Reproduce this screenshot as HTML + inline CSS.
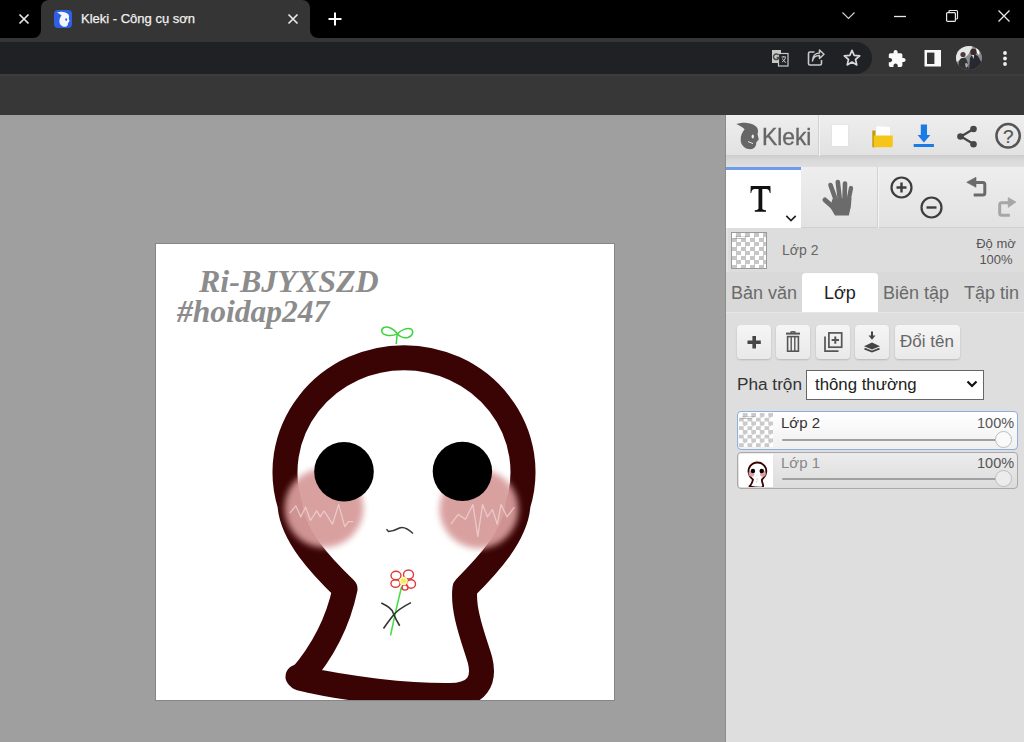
<!DOCTYPE html>
<html><head><meta charset="utf-8">
<style>
*{margin:0;padding:0;box-sizing:border-box}
html,body{width:1024px;height:742px;overflow:hidden;background:#9f9f9f;font-family:"Liberation Sans",sans-serif}
.a{position:absolute}
#tabstrip{left:0;top:0;width:1024px;height:38px;background:#000}
#tab{left:41px;top:0px;width:269px;height:42px;background:#353535;border-radius:8px 8px 0 0}
#toolbar{left:0;top:38px;width:1024px;height:36px;background:#353535}
#omni{left:-20px;top:42px;width:892px;height:32px;background:#202124;border-radius:0 16px 16px 0}
#band{left:0;top:74px;width:1024px;height:41px;background:#373737;border-top:2px solid #3c3c3c}
#canvasbg{left:0;top:115px;width:726px;height:627px;background:#9f9f9f}
#panel{left:726px;top:115px;width:298px;height:627px;background:#dddddd;border-left:2px solid #e3e3e3}
#pline{left:725px;top:115px;width:1px;height:627px;background:#8c8c8c}
.t{white-space:nowrap;line-height:1}
.btn{top:325px;height:34px;border-radius:4px;background:linear-gradient(#f5f5f5,#e9e9e9);box-shadow:0 1px 2px rgba(0,0,0,0.18)}
</style></head><body>
<div class="a" id="tabstrip"></div>
<div class="a" id="toolbar"></div>
<div class="a" id="tab"></div>

<div class="a" style="left:33px;top:30px;width:8px;height:8px;background:#353535"></div>
<div class="a" style="left:25px;top:22px;width:16px;height:16px;background:#000;border-radius:50%"></div>
<div class="a" style="left:310px;top:30px;width:8px;height:8px;background:#353535"></div>
<div class="a" style="left:310px;top:22px;width:16px;height:16px;background:#000;border-radius:50%"></div>
<div class="a" id="omni"></div>
<div class="a" id="band"></div>
<div class="a" id="canvasbg"></div>
<div class="a" id="panel"></div><div class="a" id="pline"></div>
<!-- tab contents -->
<div class="a t" style="left:81px;top:12px;font-size:13px;color:#f0f0f0;-webkit-text-stroke:0.25px #f0f0f0">Kleki - Công cụ sơn</div>


<!-- left close x -->
<svg class="a" style="left:17px;top:12px" width="14" height="14" viewBox="0 0 14 14"><path d="M2.5 2.5L11.5 11.5M11.5 2.5L2.5 11.5" stroke="#e8e8e8" stroke-width="1.7"/></svg>
<!-- favicon -->
<svg class="a" style="left:54px;top:10px" width="18" height="18" viewBox="0 0 18 18"><rect x="0" y="0" width="18" height="18" rx="4" fill="#2f5fe3"/><g transform="translate(-0.6,-0.8) scale(0.56)"><path d="M6.3 6.1C10 5 14 4.5 17 4.9C21 5.3 24.5 6.5 26.5 9C28.2 11 28.5 13.5 27.5 16L28.8 21.5L26.2 24.5C26.5 27 25.5 29.5 23 30.8C20 31.8 16.5 31 14 29C11.5 27 10.5 24 10.7 21C10.8 17.5 12 14.5 14.6 11.2C12 9 9 7.5 6.3 6.1Z" fill="#f2f6ff"/><ellipse cx="22.8" cy="18.6" rx="1.6" ry="2.4" fill="#2f5fe3"/></g></svg>
<!-- tab close -->
<svg class="a" style="left:286px;top:12px" width="14" height="14" viewBox="0 0 14 14"><path d="M2.5 2.5L11.5 11.5M11.5 2.5L2.5 11.5" stroke="#e8e8e8" stroke-width="1.7"/></svg>
<!-- new tab + -->
<svg class="a" style="left:327px;top:11px" width="16" height="16" viewBox="0 0 16 16"><path d="M8 1.5V14.5M1.5 8H14.5" stroke="#fff" stroke-width="2"/></svg>
<!-- window controls -->
<svg class="a" style="left:840px;top:8px" width="18" height="14" viewBox="0 0 18 14"><path d="M2.5 4.5L8.5 10.5L14.5 4.5" stroke="#d0d0d0" stroke-width="1.2" fill="none"/></svg>
<svg class="a" style="left:892px;top:10px" width="16" height="12" viewBox="0 0 16 12"><path d="M2 6.5H14" stroke="#e8e8e8" stroke-width="1.3"/></svg>
<svg class="a" style="left:944px;top:8px" width="16" height="16" viewBox="0 0 16 16"><path d="M5 4.5V3.5C5 2.9 5.4 2.5 6 2.5H12.5C13.1 2.5 13.5 2.9 13.5 3.5V10C13.5 10.6 13.1 11 12.5 11H11.5" stroke="#e8e8e8" stroke-width="1.2" fill="none"/><rect x="2.6" y="4.6" width="8.8" height="8.8" rx="1" stroke="#e8e8e8" stroke-width="1.2" fill="none"/></svg>
<svg class="a" style="left:996px;top:8px" width="16" height="16" viewBox="0 0 16 16"><path d="M2.5 2.5L13.5 13.5M13.5 2.5L2.5 13.5" stroke="#e8e8e8" stroke-width="1.3"/></svg>
<!-- omnibox icons -->
<svg class="a" style="left:770px;top:48px" width="20" height="20" viewBox="0 0 20 20"><path d="M2.5 2.5H10.5L11.5 5.5H17.5V17.5H8.5L7.5 14.5H2.5Z" fill="none"/><rect x="2" y="2" width="9" height="13" fill="#c8c8c8"/><rect x="8.5" y="5.5" width="9.5" height="12.5" fill="#202124" stroke="#c8c8c8" stroke-width="1.2"/><path d="M8.6 7.2A2.8 2.8 0 1 0 9 9.5H6.6" fill="none" stroke="#4a4a4a" stroke-width="1.5"/><path d="M11.5 9H16M13.7 8V9M12 14C14 13 15 11.5 15.5 9.5M12.5 10.5C13 12.5 14.5 14 16 14.5" stroke="#c8c8c8" stroke-width="1" fill="none"/></svg>
<svg class="a" style="left:806px;top:49px" width="20" height="18" viewBox="0 0 20 18"><path d="M8.5 3H4C3 3 2.5 3.5 2.5 4.5V14.5C2.5 15.5 3 16 4 16H14C15 16 15.5 15.5 15.5 14.5V11" stroke="#c8c8c8" stroke-width="1.6" fill="none"/><path d="M6.5 12C7 8.5 9.5 6.5 13.5 6.5V9.5L18 5.2L13.5 1V4C9 4 6.5 7.5 6.5 12Z" stroke="#c8c8c8" stroke-width="1.5" fill="none" stroke-linejoin="round"/></svg>
<svg class="a" style="left:842px;top:48px" width="20" height="20" viewBox="0 0 20 20"><path d="M10 2.3L12.2 7.4L17.7 7.9L13.5 11.5L14.8 16.9L10 14L5.2 16.9L6.5 11.5L2.3 7.9L7.8 7.4Z" stroke="#d8d8d8" stroke-width="1.7" fill="none" stroke-linejoin="round"/></svg>
<!-- right toolbar icons -->
<svg class="a" style="left:886px;top:48px" width="22" height="22" viewBox="0 0 22 22"><path transform="translate(1.2,1.3) scale(0.8)" d="M20.5 11H19V7c0-1.1-.9-2-2-2h-4V3.5C13 2.12 11.88 1 10.5 1S8 2.12 8 3.5V5H4c-1.1 0-1.99.9-1.99 2v3.8H3.5c1.49 0 2.7 1.21 2.7 2.7s-1.21 2.7-2.7 2.7H2V20c0 1.1.9 2 2 2h3.8v-1.5c0-1.490 1.21-2.7 2.7-2.7 1.49 0 2.7 1.21 2.7 2.7V22H17c1.1 0 2-.9 2-2v-4h1.5c1.38 0 2.5-1.12 2.5-2.5S21.88 11 20.5 11z" fill="#fafafa"/></svg>
<svg class="a" style="left:923px;top:48px" width="20" height="20" viewBox="0 0 20 20"><rect x="1.5" y="2" width="16.5" height="16.5" fill="#fafafa"/><rect x="4" y="4.6" width="7.4" height="11.4" fill="#353535"/></svg>
<svg class="a" style="left:956px;top:46px" width="26" height="24" viewBox="0 0 26 24"><defs><clipPath id="av"><ellipse cx="13" cy="12" rx="13" ry="12"/></clipPath></defs><g clip-path="url(#av)"><rect width="26" height="24" fill="#8a8a8a"/><path d="M0 0H17L12 9L5 14L0 16Z" fill="#e6e6e6"/><path d="M13 24L14 12C15 9 18 8 20 9C23 10 24 14 26 18V24Z" fill="#262a30"/><circle cx="17.5" cy="6" r="3.2" fill="#3a2c2c"/><path d="M16 9L18 9L17.5 13Z" fill="#f0f0f0"/><path d="M2 24L3 15C4 12 7 11 9 12C11 13 12 17 13 24Z" fill="#303236"/><circle cx="7" cy="8.5" r="2.6" fill="#4a3a3a"/><path d="M20 2C23 3 24 6 23 9L21 7Z" fill="#f4f4f4"/><path d="M9 18C10 16 12 17 12 20L10 22Z" fill="#b8a8a0"/></g></svg>
<svg class="a" style="left:1001px;top:49px" width="8" height="20" viewBox="0 0 8 20"><circle cx="4" cy="4" r="1.9" fill="#f0f0f0"/><circle cx="4" cy="9.5" r="1.9" fill="#f0f0f0"/><circle cx="4" cy="15" r="1.9" fill="#f0f0f0"/></svg>


<!-- CANVAS -->
<svg class="a" style="left:0;top:0" width="1024" height="742" viewBox="0 0 1024 742">
<defs>
<clipPath id="cv"><rect x="156" y="244" width="458" height="456"/></clipPath>
<radialGradient id="bl" cx="0.5" cy="0.5" r="0.5">
<stop offset="0" stop-color="#d88f8f" stop-opacity="0.95"/>
<stop offset="0.78" stop-color="#d99595" stop-opacity="0.9"/>
<stop offset="1" stop-color="#e0a0a0" stop-opacity="0"/>
</radialGradient>
<filter id="blur" x="-50%" y="-50%" width="200%" height="200%"><feGaussianBlur stdDeviation="3"/></filter>
</defs>
<rect x="155" y="243" width="460" height="458" fill="#868686"/>
<rect x="156" y="244" width="458" height="456" fill="#ffffff"/>
<g clip-path="url(#cv)"><g id="art"><g id="txt">
<text x="199" y="291.5" font-family="Liberation Serif" font-weight="bold" font-style="italic" font-size="32" fill="#8c8c8c">Ri-BJYXSZD</text>
<text x="177" y="321.5" font-family="Liberation Serif" font-weight="bold" font-style="italic" font-size="31.5" fill="#8c8c8c">#hoidap247</text>
</g><g id="fig"><path d="M290 505A119 114.5 0 1 1 518 505C516 535 488 565 465 588C462 610 474 640 480 660C485 680 478 695 450 695.5C410 696 345 689 300 678C313 663 336 632 345 589C321 566 292 535 290 505Z" fill="none" stroke="#3a0404" stroke-width="25" stroke-linejoin="round"/>
<path d="M312 681L297.5 676.5" stroke="#3a0404" stroke-width="24" stroke-linecap="round"/>
<g filter="url(#blur)" fill="#d89b9b" opacity="0.95"><circle cx="324" cy="508" r="39.5"/><circle cx="479" cy="509" r="39.5"/></g>
<circle cx="344" cy="471.7" r="29.8" fill="#000"/>
<circle cx="462.4" cy="471.4" r="29.7" fill="#000"/>
<path d="M289.8 513.2L295.9 505.9L300.8 516.9L305.6 507.1L310.5 520.5L316.6 510.8L320.3 516.9L324 511L326.4 514.4L332.5 524.2L338.6 504.6L344.7 526.6L348.4 521.7L353.2 521.7" stroke="#f4dada" stroke-width="1.3" fill="none" opacity="0.7" stroke-linejoin="round"/>
<path d="M450.9 524.2L458.2 514.4L465.5 519.3L472.9 504.6L477.8 536.4L482.6 504.6L487.5 516.9L492.4 509.5L497.3 524.2L501 504.6L507 516.9L514.4 507.1" stroke="#f4dada" stroke-width="1.3" fill="none" opacity="0.7" stroke-linejoin="round"/>
<path d="M386.5 529.3L388.5 531.5Q394 531 399.5 528Q405 526 413 533.5" stroke="#383838" stroke-width="1.5" fill="none"/>
<!-- sprout -->
<path d="M396.2 344L397.2 334" stroke="#3fd43f" stroke-width="1.5"/>
<path d="M397.4 333.8C394 329 388 326 384 327.5C380.5 329 381 334 386 335C390 336 395 335 397.4 333.8C401 330 407 327.5 411 329C414 331 413 336 408 337.5C403 338.5 399 336 397.4 333.8" stroke="#3fd43f" stroke-width="1.5" fill="none"/>
<!-- flower -->
<path d="M401.5 587L396 610L390.5 635.5" stroke="#44dd44" stroke-width="1.5" fill="none"/>
<path d="M381.3 603.1Q392 608 393.2 613Q396 620 399.7 625.8M411 602.6Q398 609 392.7 616Q388 622 383.5 628.5" stroke="#333" stroke-width="1.6" fill="none"/>
<g stroke="#e03838" stroke-width="1.4" fill="none">
<ellipse cx="396" cy="575.5" rx="5" ry="4.3"/><ellipse cx="408.5" cy="574.5" rx="5" ry="4.5"/><ellipse cx="395.5" cy="583.5" rx="4.6" ry="3.8"/><ellipse cx="411" cy="584" rx="4.5" ry="4.3"/><ellipse cx="405" cy="587.5" rx="3" ry="2.6"/>
</g>
<circle cx="403.5" cy="581" r="4.2" fill="#fafab0"/>
<circle cx="403.5" cy="581" r="2.5" fill="#f6ea60"/>
</g></g></g>
</svg>
<!-- KLEKI PANEL -->
<div class="a" style="left:726px;top:115px;width:298px;height:41px;background:linear-gradient(#eeeeee,#e2e2e2);border-bottom:1px solid #cdcdcd"></div>
<div class="a" style="left:818px;top:115px;width:1px;height:41px;background:#d2d2d2"></div>
<div class="a" style="left:819px;top:115px;width:1px;height:41px;background:#f2f2f2"></div>
<div class="a" style="left:726px;top:156px;width:298px;height:11px;background:linear-gradient(#cfcfcf,#d9d9d9 40%,#dfdfdf)"></div>
<svg class="a" style="left:730px;top:118px" width="36" height="36" viewBox="0 0 36 36"><path d="M6.3 6.1C10 5 14 4.5 17 4.9C21 5.3 24.5 6.5 26.5 9C28.2 11 28.5 13.5 27.5 16L28.8 21.5L26.2 24.5C26.5 27 25.5 29.5 23 30.8C20 31.8 16.5 31 14 29C11.5 27 10.5 24 10.7 21C10.8 17.5 12 14.5 14.6 11.2C12 9 9 7.5 6.3 6.1Z" fill="#666"/><ellipse cx="22.8" cy="18.6" rx="1.2" ry="2" fill="#ececec"/><path d="M18 23.6L23 25.6" stroke="#e8e8e8" stroke-width="1"/></svg>
<div class="a t" style="left:762px;top:125px;font-size:24px;color:#666;-webkit-text-stroke:0.35px #666;transform:scaleX(0.95);transform-origin:0 0">Kleki</div>
<div class="a" style="left:832px;top:125px;width:16px;height:21px;background:#fff;box-shadow:0 0 1px #ccc"></div>
<svg class="a" style="left:870px;top:124px" width="26" height="26" viewBox="0 0 26 26"><path d="M6.5 2.2L19.8 3L20.2 12.5H6Z" fill="#fff"/><path d="M2.3 6.5H5.5V23.3H2.3Z" fill="#c49a0c"/><path d="M3.8 11.6H22.8V21.5Q22.8 23.3 21 23.3H3.8Z" fill="#f6c51a"/></svg>
<svg class="a" style="left:912px;top:123px" width="24" height="26" viewBox="0 0 24 26"><path d="M8.8 1.5H15V12H18.4L11.9 19.6L5.6 12H8.8Z" fill="#1a7be6"/><rect x="1.7" y="21" width="20.2" height="3" fill="#1a7be6"/></svg>
<svg class="a" style="left:953.7px;top:123.5px" width="26" height="26" viewBox="0 0 26 26"><path d="M19.5 5L7 12.5L19.5 20" stroke="#474747" stroke-width="2.3" fill="none"/><circle cx="19.5" cy="5" r="3.3" fill="#474747"/><circle cx="6.5" cy="12.5" r="3.3" fill="#474747"/><circle cx="19.5" cy="20.3" r="3.3" fill="#474747"/></svg>
<svg class="a" style="left:994px;top:122px" width="28" height="28" viewBox="0 0 28 28"><circle cx="14.1" cy="13.8" r="11.7" stroke="#555" stroke-width="2.5" fill="none"/><text x="14.3" y="20.6" text-anchor="middle" font-family="Liberation Sans" font-size="19" fill="#555" stroke="#555" stroke-width="0.2">?</text></svg>

<!-- tool row -->
<div class="a" style="left:726px;top:167px;width:298px;height:61px;background:linear-gradient(#eeeeee,#e2e2e2);border-bottom:1px solid #d0d0d0"></div>
<div class="a" style="left:726px;top:167px;width:75px;height:61px;background:#fff;border-top:3px solid #6f9ce8"></div>
<div class="a" style="left:877px;top:167px;width:1px;height:61px;background:#d2d2d2"></div>
<div class="a" style="left:878px;top:167px;width:1px;height:61px;background:#f4f4f4"></div>
<svg class="a" style="left:748px;top:183px" width="26" height="32" viewBox="0 0 26 32"><path d="M2.7 3H22.4L22.6 10H21.8C21.3 7.5 20.5 6 18 6H14.3V25.3C14.3 26.5 15 27 18 27.3V28.7H6.8V27.3C9.8 27 10.5 26.5 10.5 25.3V6H7C4.5 6 3.7 7.5 3.2 10H2.5Z" fill="#111"/></svg>
<svg class="a" style="left:784px;top:212px" width="14" height="12" viewBox="0 0 14 12"><path d="M2.3 3.8L7 8.5L11.7 3.8" stroke="#222" stroke-width="1.7" fill="none"/></svg>
<svg class="a" style="left:815px;top:175px" width="45" height="45" viewBox="0 0 45 45"><g stroke="#6b6b6b" stroke-linecap="round"><path d="M10 25L19 33" stroke-width="5"/><path d="M15.5 10L21.5 27" stroke-width="4.6"/><path d="M22.8 7L25 26" stroke-width="4.6"/><path d="M30 8.5L29.5 26" stroke-width="4.6"/><path d="M36 13L33 28" stroke-width="4.3"/></g><path d="M17.5 24L36.5 23L35.8 32L33.8 40.6H20L15 32Z" fill="#6b6b6b"/></svg>
<svg class="a" style="left:888px;top:174px" width="27" height="27" viewBox="0 0 27 27"><circle cx="13.5" cy="13.5" r="10" stroke="#3d3d3d" stroke-width="2.2" fill="none"/><path d="M13.5 8.5V18.5M8.5 13.5H18.5" stroke="#3d3d3d" stroke-width="2.4"/></svg>
<svg class="a" style="left:918px;top:194px" width="27" height="27" viewBox="0 0 27 27"><circle cx="13.5" cy="13.5" r="10" stroke="#3d3d3d" stroke-width="2.2" fill="none"/><path d="M8.5 13.5H18.5" stroke="#3d3d3d" stroke-width="2.4"/></svg>
<svg class="a" style="left:964px;top:175px" width="26" height="26" viewBox="0 0 26 26"><path d="M2.7 7.3L12 2.2V12.3Z" fill="#6a6a6a" stroke="#6a6a6a" stroke-width="0.6" stroke-linejoin="round"/><path d="M11 7.5H18.8Q20.8 7.5 20.8 9.5V18Q20.8 20 18.8 20H9.7" stroke="#6a6a6a" stroke-width="3" fill="none"/></svg>
<svg class="a" style="left:994px;top:195px" width="26" height="26" viewBox="0 0 26 26"><path d="M22 7.1L14.2 2.5V12.5Z" fill="#a6a6a6" stroke="#a6a6a6" stroke-width="0.6" stroke-linejoin="round"/><path d="M15 7.8H7.7Q5.7 7.8 5.7 9.8V18.3Q5.7 20.3 7.7 20.3H15.8" stroke="#a6a6a6" stroke-width="3" fill="none"/></svg>

<!-- layer preview row -->
<div class="a" style="left:731px;top:232px;width:36px;height:37px;border:1px solid #9a9a9a;background:repeating-conic-gradient(#c6c6c6 0% 25%,#ffffff 0% 50%) 0 0/9px 9px"></div><svg class="a" style="left:732px;top:233px" width="35" height="35" viewBox="0 0 35 35"><g transform="scale(0.0764) translate(-156,-243)">
<text x="199" y="291.5" font-family="Liberation Serif" font-weight="bold" font-style="italic" font-size="32" fill="#8c8c8c">Ri-BJYXSZD</text>
<text x="177" y="321.5" font-family="Liberation Serif" font-weight="bold" font-style="italic" font-size="31.5" fill="#8c8c8c">#hoidap247</text>
</g></svg>
<div class="a t" style="left:782px;top:243px;font-size:14px;color:#666">Lớp 2</div>
<div class="a t" style="left:975px;top:236px;font-size:13px;color:#555;text-align:center;width:42px;line-height:16px">Độ mờ<br>100%</div>

<!-- tabs -->
<div class="a" style="left:726px;top:272px;width:298px;height:40px;background:#d9d9d9"></div>
<div class="a" style="left:802px;top:273px;width:76px;height:39px;background:#fff;border-radius:4px 4px 0 0"></div>
<div class="a t" style="left:731px;top:284px;font-size:18px;color:#6a6a6a">Bản văn</div>
<div class="a t" style="left:824px;top:284px;font-size:18px;color:#222">Lớp</div>
<div class="a t" style="left:883px;top:284px;font-size:18px;color:#6a6a6a">Biên tập</div>
<div class="a t" style="left:964px;top:284px;font-size:18px;color:#6a6a6a">Tập tin</div>
<div class="a" style="left:726px;top:312px;width:298px;height:430px;background:#dedede;border-top:1px solid #e6e6e6"></div>

<!-- layer buttons -->
<div class="a btn" style="left:737px;top:325px;width:34px"></div>
<div class="a btn" style="left:776px;top:325px;width:34px"></div>
<div class="a btn" style="left:816px;top:325px;width:34px"></div>
<div class="a btn" style="left:855px;top:325px;width:34px"></div>
<div class="a btn" style="left:895px;top:325px;width:65px"></div>
<svg class="a" style="left:746px;top:334px" width="16" height="16" viewBox="0 0 16 16"><path d="M8.2 2V14.6M1.5 8.3H14.8" stroke="#454545" stroke-width="3.6"/></svg>
<svg class="a" style="left:784px;top:330px" width="18" height="24" viewBox="0 0 18 24"><path d="M2 3.6H16" stroke="#555" stroke-width="2"/><path d="M6.5 2.6C7 1.4 11 1.4 11.5 2.6" stroke="#555" stroke-width="1.5" fill="none"/><rect x="3.6" y="6.6" width="10.8" height="14.6" stroke="#555" stroke-width="1.6" fill="none"/><path d="M7.2 7V21M10.8 7V21" stroke="#555" stroke-width="1.4"/></svg>
<svg class="a" style="left:822px;top:330px" width="22" height="24" viewBox="0 0 22 24"><path d="M3 6.5V21.2H16.5" stroke="#555" stroke-width="1.7" fill="none"/><rect x="6.9" y="2.9" width="12.8" height="14.3" stroke="#555" stroke-width="1.7" fill="none"/><path d="M13.3 6.5V13.8M9.6 10.1H17" stroke="#555" stroke-width="2"/></svg>
<svg class="a" style="left:862px;top:330px" width="20" height="24" viewBox="0 0 20 24"><path d="M10 1.5V6.5" stroke="#444" stroke-width="2"/><path d="M6.5 5.5H13.5L10 9.8Z" fill="#444"/><path d="M2 16.2L10 12.6L18 16.2L10 19.5Z" fill="#444"/><path d="M2.5 18.6L10 21.6L17.5 18.6" stroke="#444" stroke-width="1.8" fill="none"/></svg>
<div class="a t" style="left:900px;top:333px;font-size:17px;color:#666">Đổi tên</div>

<!-- blend -->
<div class="a t" style="left:737px;top:376px;font-size:17.2px;color:#333">Pha trộn</div>
<div class="a" style="left:806px;top:370px;width:178px;height:30px;background:#fff;border:1px solid #666"></div>
<div class="a t" style="left:815px;top:377px;font-size:16.8px;color:#222">thông thường</div>
<svg class="a" style="left:964px;top:378px" width="16" height="12" viewBox="0 0 16 12"><path d="M3.5 3.5L8 8L12.5 3.5" stroke="#111" stroke-width="2.2" fill="none"/></svg>

<!-- layer list -->
<div class="a" style="left:737px;top:411px;width:281px;height:39px;border:1px solid #8eaee0;border-radius:4px;background:linear-gradient(#ffffff,#f0f0f0)"></div>
<div class="a" style="left:739px;top:413px;width:34px;height:34px;background:repeating-conic-gradient(#cacaca 0% 25%,#ffffff 0% 50%) 0 0/8.5px 8.5px"></div><svg class="a" style="left:739px;top:413px" width="34" height="34" viewBox="0 0 34 34"><g transform="scale(0.0742) translate(-156,-243)">
<text x="199" y="291.5" font-family="Liberation Serif" font-weight="bold" font-style="italic" font-size="32" fill="#8c8c8c">Ri-BJYXSZD</text>
<text x="177" y="321.5" font-family="Liberation Serif" font-weight="bold" font-style="italic" font-size="31.5" fill="#8c8c8c">#hoidap247</text>
</g></svg>
<div class="a t" style="left:781px;top:415px;font-size:15px;color:#333">Lớp 2</div>
<div class="a t" style="left:977px;top:415.5px;font-size:14.5px;color:#555">100%</div>
<div class="a" style="left:782px;top:438.5px;width:220px;height:2.5px;background:#a0a0a0;border-radius:1px"></div>
<div class="a" style="left:995px;top:431px;width:17px;height:17px;border-radius:50%;background:#fafafa;border:1px solid #bdbdbd"></div>

<div class="a" style="left:737px;top:452px;width:281px;height:37px;border:1px solid #a9a9a9;border-radius:4px;background:linear-gradient(#ececec,#dcdcdc)"></div>
<div class="a" style="left:739px;top:454px;width:34px;height:33px;background:#fff"></div>
<svg class="a" style="left:739px;top:454px" width="34" height="33" viewBox="0 0 34 33"><g transform="scale(0.0742) translate(-156,-243)"><path d="M290 505A119 114.5 0 1 1 518 505C516 535 488 565 465 588C462 610 474 640 480 660C485 680 478 695 450 695.5C410 696 345 689 300 678C313 663 336 632 345 589C321 566 292 535 290 505Z" fill="none" stroke="#3a0404" stroke-width="25" stroke-linejoin="round"/>
<path d="M312 681L297.5 676.5" stroke="#3a0404" stroke-width="24" stroke-linecap="round"/>
<g filter="url(#blur)" fill="#d89b9b" opacity="0.95"><circle cx="324" cy="508" r="39.5"/><circle cx="479" cy="509" r="39.5"/></g>
<circle cx="344" cy="471.7" r="29.8" fill="#000"/>
<circle cx="462.4" cy="471.4" r="29.7" fill="#000"/>
<path d="M289.8 513.2L295.9 505.9L300.8 516.9L305.6 507.1L310.5 520.5L316.6 510.8L320.3 516.9L324 511L326.4 514.4L332.5 524.2L338.6 504.6L344.7 526.6L348.4 521.7L353.2 521.7" stroke="#f4dada" stroke-width="1.3" fill="none" opacity="0.7" stroke-linejoin="round"/>
<path d="M450.9 524.2L458.2 514.4L465.5 519.3L472.9 504.6L477.8 536.4L482.6 504.6L487.5 516.9L492.4 509.5L497.3 524.2L501 504.6L507 516.9L514.4 507.1" stroke="#f4dada" stroke-width="1.3" fill="none" opacity="0.7" stroke-linejoin="round"/>
<path d="M386.5 529.3L388.5 531.5Q394 531 399.5 528Q405 526 413 533.5" stroke="#383838" stroke-width="1.5" fill="none"/>
<!-- sprout -->
<path d="M396.2 344L397.2 334" stroke="#3fd43f" stroke-width="1.5"/>
<path d="M397.4 333.8C394 329 388 326 384 327.5C380.5 329 381 334 386 335C390 336 395 335 397.4 333.8C401 330 407 327.5 411 329C414 331 413 336 408 337.5C403 338.5 399 336 397.4 333.8" stroke="#3fd43f" stroke-width="1.5" fill="none"/>
<!-- flower -->
<path d="M401.5 587L396 610L390.5 635.5" stroke="#44dd44" stroke-width="1.5" fill="none"/>
<path d="M381.3 603.1Q392 608 393.2 613Q396 620 399.7 625.8M411 602.6Q398 609 392.7 616Q388 622 383.5 628.5" stroke="#333" stroke-width="1.6" fill="none"/>
<g stroke="#e03838" stroke-width="1.4" fill="none">
<ellipse cx="396" cy="575.5" rx="5" ry="4.3"/><ellipse cx="408.5" cy="574.5" rx="5" ry="4.5"/><ellipse cx="395.5" cy="583.5" rx="4.6" ry="3.8"/><ellipse cx="411" cy="584" rx="4.5" ry="4.3"/><ellipse cx="405" cy="587.5" rx="3" ry="2.6"/>
</g>
<circle cx="403.5" cy="581" r="4.2" fill="#fafab0"/>
<circle cx="403.5" cy="581" r="2.5" fill="#f6ea60"/>
</g></svg>
<div class="a t" style="left:781px;top:455px;font-size:15px;color:#888">Lớp 1</div>
<div class="a t" style="left:977px;top:455.5px;font-size:14.5px;color:#555">100%</div>
<div class="a" style="left:782px;top:477.5px;width:220px;height:2.5px;background:#a0a0a0;border-radius:1px"></div>
<div class="a" style="left:995px;top:470px;width:17px;height:17px;border-radius:50%;background:#ececec;border:1px solid #bdbdbd"></div>
</body></html>
